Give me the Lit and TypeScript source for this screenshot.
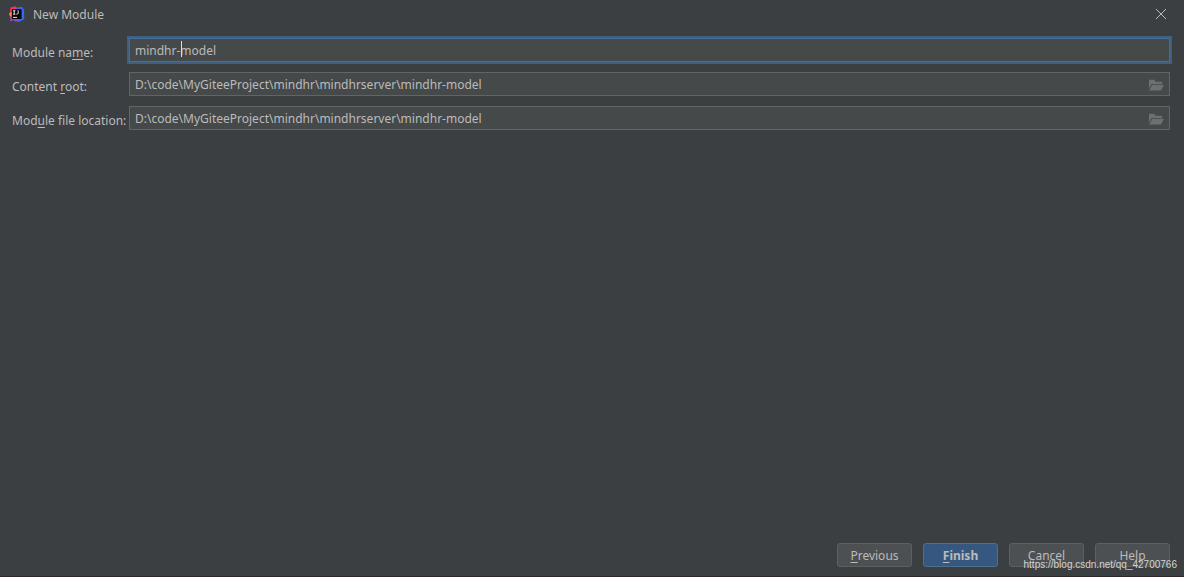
import { LitElement, html, css, svg } from "lit";
import { customElement } from "lit/decorators.js";

const folderIcon = html`<svg class="folder" viewBox="0 0 16 12" aria-hidden="true">
  <path d="M1 9.5V.8h5.2l1.4 2H14V5H3.8z" />
  <path d="M4.4 5.8H16l-3 5.7H1z" />
</svg>`;

const logoShapes = svg`
  <path d="M1.5 1.5 6.5 .3 9 3 3 10 .8 7z" fill="#fc2f65" />
  <path d="M0 7.5 3 5.5v5.5L1 10.5z" fill="#fd8c35" />
  <path d="M8 1.5 13 .8 15.2 4v9.2L10 16 4 14z" fill="#2f6bf0" />
  <path d="M.8 11 5 10l4 5-2.5.7L5 14l-3.5 1.5z" fill="#9a44c8" />
  <rect x="2.8" y="3.2" width="9.8" height="9.8" fill="#0a0507" />
  <path d="M4 4.8h2.4M5.2 4.8v3.4M4 8.2h2.4M9.2 4.3v2.9q0 1-1.8 1" fill="none" stroke="#fff" stroke-width=".9" />
  <path d="M4 11.4h4" stroke="#fff" stroke-width=".9" />`;

@customElement("app-root")
export class AppRoot extends LitElement {
  static styles = css`
    :host {
      display: block;
      font: 12px/18px "Noto Sans", "Open Sans", sans-serif;
      color: #bbbbbb;
    }
    * { box-sizing: border-box; }
    .dialog {
      display: flex;
      flex-direction: column;
      min-height: 100vh;
      background: #3c3f41;
      border-bottom: 1px solid #30282d;
    }
    .title-bar {
      display: flex;
      align-items: center;
      height: 28px;
      padding: 0 16px 0 9px;
    }
    .logo { width: 16px; height: 16px; margin-right: 8px; }
    h1 { flex: 1; margin: 0; padding-top: 2px; font: inherit; }
    button { font: inherit; color: inherit; }
    .close {
      display: flex;
      padding: 0;
      border: 0;
      background: none;
    }
    .close svg { width: 14px; height: 14px; stroke: #bbbbbb; fill: none; }
    .form {
      display: grid;
      grid-template-columns: 116px 1fr;
      column-gap: 1px;
      row-gap: 10px;
      padding: 10px 14px 0 12px;
    }
    label { white-space: nowrap; padding-top: 6px; height: 24px; }
    u { text-underline-offset: 2px; }
    .field { position: relative; display: flex; }
    input {
      width: 100%;
      height: 24px;
      padding: 1px 28px 0 5px;
      border: 1px solid #646464;
      border-radius: 0;
      outline: none;
      background: #45494a;
      font: inherit;
      color: inherit;
    }
    .focused input { border-color: #466d94; box-shadow: 0 0 0 2px #3d6185; }
    .caret {
      position: absolute;
      left: 52px;
      top: 3px;
      width: 1px;
      height: 16px;
      background: #dddddd;
    }
    .browse {
      position: absolute;
      right: 6px;
      top: 7px;
      display: flex;
      padding: 0;
      border: 0;
      background: none;
    }
    .folder { width: 16px; height: 12px; fill: #6b7073; }
    .actions {
      display: flex;
      justify-content: flex-end;
      gap: 11px;
      margin-top: auto;
      padding: 0 14px 9px;
    }
    .action {
      width: 75px;
      height: 24px;
      padding: 2px 0 0;
      border: 1px solid #5e6060;
      border-radius: 3px;
      background: #4c5052;
    }
    .primary { background: #365880; border-color: #4c708c; font-weight: 700; }
    .watermark {
      position: absolute;
      right: 7px;
      bottom: 5px;
      font: 10px/14px "Liberation Sans", Arial, sans-serif;
      color: #d4d4d4;
      pointer-events: none;
    }
  `;

  render() {
    return html`<main class="dialog">
      <header class="title-bar">
        <svg class="logo" viewBox="0 0 16 16" aria-hidden="true">${logoShapes}</svg>
        <h1>New Module</h1>
        <button class="close" aria-label="Close">
          <svg viewBox="0 0 14 14"><path d="M2 2l10 10M12 2L2 12" /></svg>
        </button>
      </header>
      <form class="form">
        <label for="name">Module na<u>m</u>e:</label>
        <div class="field focused">
          <input id="name" type="text" value="mindhr-model" spellcheck="false" />
          <span class="caret"></span>
        </div>
        <label for="root">Content <u>r</u>oot:</label>
        ${this.pathField("root")}
        <label for="location">Mod<u>u</u>le file location:</label>
        ${this.pathField("location")}
      </form>
      <footer class="actions">
        <button class="action"><u>P</u>revious</button>
        <button class="action primary"><u>F</u>inish</button>
        <button class="action">Cancel</button>
        <button class="action">Help</button>
      </footer>
      <div class="watermark">https://blog.csdn.net/qq_42700766</div>
    </main>`;
  }

  private pathField(id: string) {
    return html`<div class="field">
      <input id=${id} type="text" value="D:\\code\\MyGiteeProject\\mindhr\\mindhrserver\\mindhr-model" spellcheck="false" />
      <button type="button" class="browse" aria-label="Browse">${folderIcon}</button>
    </div>`;
  }
}
